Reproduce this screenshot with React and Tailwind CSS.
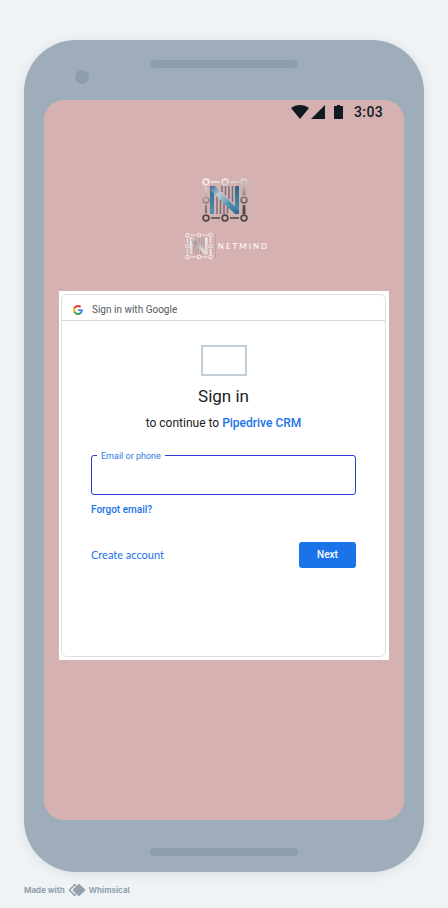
import React from "react";

const NODES = [
  [4, 4], [23, 4], [42, 4],
  [4, 22], [42, 22],
  [4, 40], [23, 40], [42, 40],
];

function CircuitN({ className, id, tones, stroke, bars }) {
  return (
    <svg viewBox="0 0 46 44" className={className} aria-hidden="true">
      <defs>
        <linearGradient id={id + "-stem"} gradientUnits="userSpaceOnUse" x1="0" y1="8" x2="0" y2="36">
          <stop offset="0" stopColor={tones[0]} />
          <stop offset="1" stopColor={tones[1]} />
        </linearGradient>
        <linearGradient id={id} gradientUnits="userSpaceOnUse" x1="8" y1="8" x2="37" y2="36">
          <stop offset="0" stopColor={tones[0]} />
          <stop offset="0.3" stopColor={tones[2]} />
          <stop offset="0.65" stopColor={tones[1]} />
          <stop offset="1" stopColor={tones[3]} />
        </linearGradient>
        <linearGradient id={id + "-frame"} gradientUnits="userSpaceOnUse" x1="18" y1="2" x2="26" y2="42">
          <stop offset="0" stopColor={stroke[0]} />
          <stop offset="0.45" stopColor={stroke[1]} />
          <stop offset="0.8" stopColor={stroke[2]} />
          <stop offset="1" stopColor={stroke[2]} />
        </linearGradient>
      </defs>
      <path
        d="M15 17V36M18.5 21V36M22 25V36M25.5 29V36M20 8V14M23.5 8V17M27 8V21M30.5 8V24"
        stroke={bars}
        strokeWidth="1.5"
        fill="none"
      />
      <g fill={"url(#" + id + "-frame)"}>
        <path d="M9 3.2H18V4.8H9ZM28 3.2H37V4.8H28ZM9 39.2H18V40.8H9ZM28 39.2H37V40.8H28Z" />
        <path d="M3.2 9H4.8V17H3.2ZM3.2 27H4.8V35H3.2ZM40.6 8H43.4V17H40.6ZM40.6 27H43.4V36H40.6Z" />
      </g>
      <path d="M8 8H12V36H8ZM33 8H37V36H33Z" fill={"url(#" + id + "-stem)"} />
      <path d="M8 8H13L37 33V36H33L8 12Z" fill={"url(#" + id + ")"} />
      <g fill="none" stroke={"url(#" + id + "-frame)"} strokeWidth="1.7">
        {NODES.map(([x, y]) => (
          <circle key={x + "-" + y} cx={x} cy={y} r="2.9" />
        ))}
      </g>
    </svg>
  );
}

function GoogleMark() {
  return (
    <svg viewBox="0 0 48 48" className="size-[10px]" aria-hidden="true">
      <path fill="#EA4335" d="M24 9.5c3.54 0 6.71 1.22 9.21 3.6l6.85-6.85C35.9 2.38 30.47 0 24 0 14.62 0 6.51 5.38 2.56 13.22l7.98 6.19C12.43 13.72 17.74 9.5 24 9.5z" />
      <path fill="#4285F4" d="M46.98 24.55c0-1.57-.15-3.09-.38-4.55H24v9.02h12.94c-.58 2.96-2.26 5.48-4.78 7.18l7.73 6c4.51-4.18 7.09-10.36 7.09-17.65z" />
      <path fill="#FBBC05" d="M10.53 28.59c-.48-1.45-.76-2.99-.76-4.59s.27-3.14.76-4.59l-7.98-6.19C.92 16.46 0 20.12 0 24c0 3.88.92 7.54 2.56 10.78l7.97-6.19z" />
      <path fill="#34A853" d="M24 48c6.48 0 11.93-2.13 15.89-5.81l-7.73-6c-2.15 1.45-4.92 2.3-8.16 2.3-6.26 0-11.57-4.22-13.47-9.91l-7.98 6.19C6.51 42.62 14.62 48 24 48z" />
    </svg>
  );
}

function StatusBar() {
  return (
    <div className="flex h-6 items-center justify-end pr-[21px] text-[#101a20]">
      <svg viewBox="0 0 18 14" className="h-[14px] w-[18px]" fill="currentColor" aria-hidden="true">
        <path d="M0 3C5-1 13-1 18 3L9 14Z" />
      </svg>
      <svg viewBox="0 0 14 14" className="ml-[2px] size-[14px]" fill="currentColor" aria-hidden="true">
        <path d="M14 0V14H0Z" />
      </svg>
      <svg viewBox="0 0 9 14" className="ml-[9px] h-[14px] w-[9px]" fill="currentColor" aria-hidden="true">
        <path d="M3 0H6V1H9V14H0V1H3Z" />
      </svg>
      <span className="ml-[11px] text-[14px] leading-6 font-medium tracking-wide">3:03</span>
    </div>
  );
}

function SignInCard() {
  return (
    <div className="bg-white pt-[3px] pr-[3px] pb-[3px] pl-[2px]">
      <form
        className="min-h-[363px] rounded-[6px] border border-[#dddfe2]"
        onSubmit={(e) => e.preventDefault()}
      >
        <div className="flex h-[26px] items-center gap-[9px] border-b border-[#d5d7da] pt-1 pl-[11px]">
          <GoogleMark />
          <span className="text-[10px] leading-4 text-[#55595e]">Sign in with Google</span>
        </div>
        <div className="px-[29px] pt-6">
          <div className="mx-auto h-[31px] w-[46px] border-2 border-[#c1cdd7]" />
          <h1 className="mt-2 text-center text-[17px] leading-6 text-[#202124]">Sign in</h1>
          <p className="mt-[7px] text-center text-[12px] leading-4 text-[#202124]">
            to continue to{" "}
            <a href="#pipedrive" className="font-medium text-[#1a73e8]">Pipedrive CRM</a>
          </p>
          <div className="relative mt-6">
            <label
              htmlFor="identifier"
              className="absolute -top-[7px] left-[6px] bg-white px-1 text-[9px] leading-4 text-[#2f78e0]"
            >
              Email or phone
            </label>
            <input
              id="identifier"
              type="text"
              className="block h-10 w-full rounded-[3px] border border-[#2a3bd6] bg-white px-3 text-[12px] text-[#202124] outline-none"
            />
          </div>
          <a href="#forgot" className="mt-[7px] block w-fit text-[10px] leading-4 font-medium text-[#1a73e8]">
            Forgot email?
          </a>
          <div className="mt-6 flex items-center justify-between">
            <a href="#create" className="font-['Lato',sans-serif] text-[11px] leading-4 text-[#1a73e8]">
              Create account
            </a>
            <button
              type="submit"
              className="h-[26px] w-[57px] rounded-[3px] bg-[#1a73e8] text-[10px] leading-4 font-medium text-white"
            >
              Next
            </button>
          </div>
        </div>
      </form>
    </div>
  );
}

function Phone() {
  return (
    <div className="mx-auto max-w-[400px] rounded-[52px] bg-[#9eadb9] px-5 shadow-[0_2px_12px_rgba(60,80,100,0.12)]">
      <div className="grid h-[60px] grid-cols-[1fr_148px_1fr]">
        <span className="mt-[30px] ml-[31px] size-[14px] rounded-full bg-[#8e9dab]" />
        <span className="mt-5 h-2 rounded-full bg-[#8e9dab]" />
      </div>
      <main className="min-h-[720px] rounded-[20px] bg-[#d6b1b1]">
        <StatusBar />
        <div className="flex flex-col items-center pt-[54px] pl-[2px]">
          <CircuitN
            id="mark"
            className="h-[44px] w-[46px]"
            tones={["#2d6a8a", "#4f93b3", "#bccdd6", "#2b6787"]}
            stroke={["#f2eeee", "#938b8c", "#4c4649"]}
            bars="#77727a"
          />
          <div className="mt-[10px] flex items-center pl-1">
            <CircuitN
              id="wordmark"
              className="h-[28px] w-[28px]"
              tones={["#f0edee", "#d9d2d3", "#a0979a", "#e6dfe0"]}
              stroke={["#f1eded", "#e6dcdc", "#f1eded"]}
              bars="#a99c9e"
            />
            <span className="ml-[2px] h-6 w-px bg-[#c0a5a6]" />
            <span className="ml-[2px] font-['Lato',sans-serif] text-[8px] leading-4 tracking-[0.25em] text-white">
              NETMIND
            </span>
          </div>
        </div>
        <div className="px-[15px] pt-[31px]">
          <SignInCard />
        </div>
      </main>
      <div className="flex h-[52px] justify-center pt-7">
        <span className="h-2 w-[148px] rounded-full bg-[#8e9dab]" />
      </div>
    </div>
  );
}

export default function App() {
  return (
    <div className="min-h-screen bg-[#eff3f6] px-6 pt-10 font-['Roboto',sans-serif]">
      <Phone />
      <footer className="mx-auto flex max-w-[400px] items-center pt-[10px] font-['Inter',sans-serif] text-[8px] leading-4 font-bold text-[#93a1ac]">
        <span>Made with</span>
        <svg viewBox="0 0 18 14" className="mx-[3px] h-[14px] w-[18px]" aria-hidden="true">
          <path d="M8 3L6.8 1.6L1.3 7L6.8 12.4L8 11" fill="none" stroke="currentColor" strokeWidth="1.5" strokeLinejoin="round" />
          <path d="M11 1.4L16.8 7L11 12.6L5.2 7Z" fill="currentColor" stroke="currentColor" strokeWidth="1.2" strokeLinejoin="round" />
        </svg>
        <span>Whimsical</span>
      </footer>
    </div>
  );
}
